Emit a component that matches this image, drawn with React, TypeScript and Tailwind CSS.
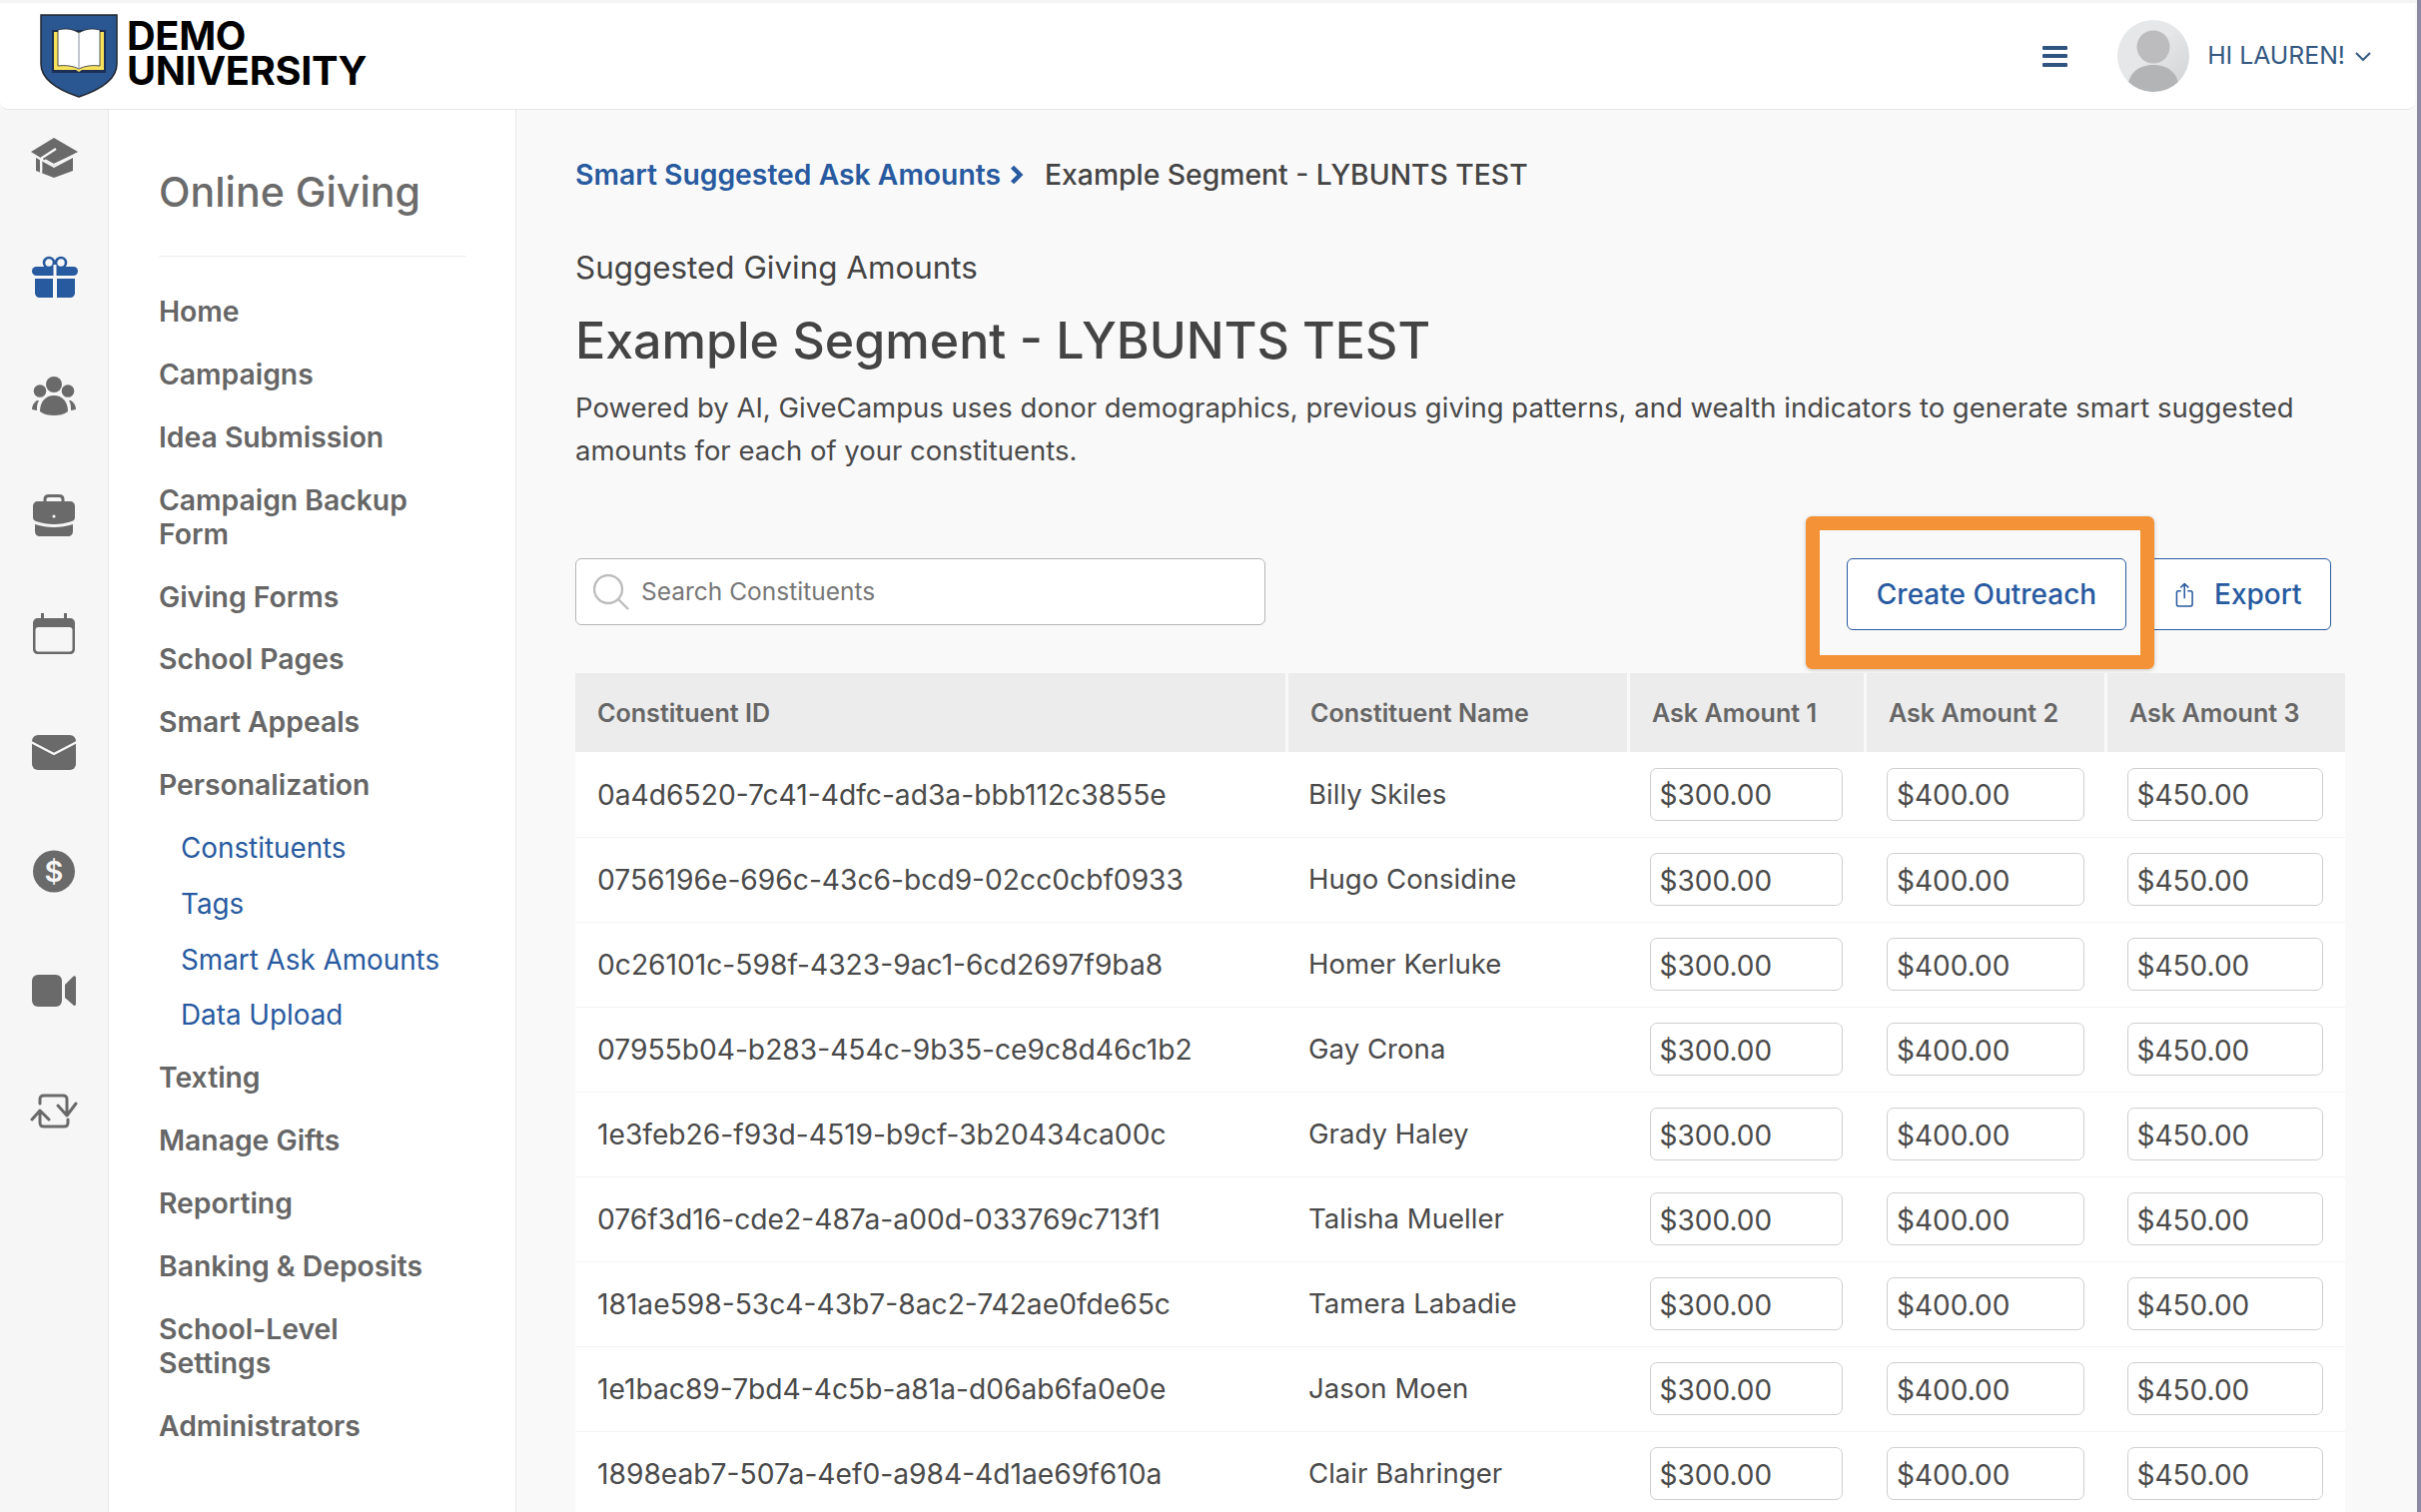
const mainNav = [
  { label: 'Home' },
  { label: 'Campaigns' },
  { label: 'Idea Submission' },
  { label: 'Campaign Backup Form' },
  { label: 'Giving Forms' },
  { label: 'School Pages' },
  { label: 'Smart Appeals' },
  { label: 'Personalization', children: ['Constituents', 'Tags', 'Smart Ask Amounts', 'Data Upload'] },
  { label: 'Texting' },
  { label: 'Manage Gifts' },
  { label: 'Reporting' },
  { label: 'Banking & Deposits' },
  { label: 'School-Level Settings' },
  { label: 'Administrators' },
]

const rows = [
  ['0a4d6520-7c41-4dfc-ad3a-bbb112c3855e', 'Billy Skiles'],
  ['0756196e-696c-43c6-bcd9-02cc0cbf0933', 'Hugo Considine'],
  ['0c26101c-598f-4323-9ac1-6cd2697f9ba8', 'Homer Kerluke'],
  ['07955b04-b283-454c-9b35-ce9c8d46c1b2', 'Gay Crona'],
  ['1e3feb26-f93d-4519-b9cf-3b20434ca00c', 'Grady Haley'],
  ['076f3d16-cde2-487a-a00d-033769c713f1', 'Talisha Mueller'],
  ['181ae598-53c4-43b7-8ac2-742ae0fde65c', 'Tamera Labadie'],
  ['1e1bac89-7bd4-4c5b-a81a-d06ab6fa0e0e', 'Jason Moen'],
  ['1898eab7-507a-4ef0-a984-4d1ae69f610a', 'Clair Bahringer'],
]

const Logo = () => (
  <svg viewBox="0 0 78 84" className="w-[78px] h-[84px] shrink-0">
    <path d="M1 1H77V50C77 66 60 76 39 83C18 76 1 66 1 50Z" fill="#2a5691" stroke="#23272e" strokeWidth="1.5" />
    <rect x="12" y="16" width="54" height="43" fill="#1d2f52" />
    <path d="M14 18H64V56H42L39 58L36 56H14Z" fill="#f7e25c" />
    <path d="M18 16C26 14 33 15 39 19C45 15 52 14 60 16V52C52 51 45 52 39 55C33 52 26 51 18 52Z" fill="#ffffff" stroke="#22262c" strokeWidth="0.8" />
    <path d="M39 19V55" stroke="#9aa0ac" strokeWidth="1.2" />
  </svg>
)

const Avatar = () => (
  <svg viewBox="0 0 72 72" className="w-[72px] h-[72px] shrink-0">
    <defs>
      <linearGradient id="avatarBg" x1="0" y1="0" x2="1" y2="1">
        <stop offset="0.45" stopColor="#e6e7e9" />
        <stop offset="1" stopColor="#d0d1d3" />
      </linearGradient>
      <clipPath id="avatarClip">
        <circle cx="36" cy="36" r="36" />
      </clipPath>
    </defs>
    <circle cx="36" cy="36" r="36" fill="url(#avatarBg)" />
    <circle cx="36" cy="27" r="16.5" fill="#bcbcbe" />
    <path d="M10 72C10 54 20 45 36 45C52 45 62 54 62 72Z" fill="#b3b4b6" clipPath="url(#avatarClip)" />
  </svg>
)

const iconBox = 'w-[48px] h-[44px] shrink-0'

const HatIcon = () => (
  <svg viewBox="-1 -2 48 44" className={iconBox}>
    <path d="M23 0L47 14L23 28L0 14Z" fill="#6a6a6a" />
    <path d="M5 20L23 30L42 20V33L23 40L5 33Z" fill="#6a6a6a" />
    <path d="M14 22L23 27L46 16" fill="none" stroke="#f6f6f6" strokeWidth="2" />
    <path d="M25 11L11 20C9 24 11 27 10 35" fill="none" stroke="#f6f6f6" strokeWidth="2.4" />
  </svg>
)

const GiftIcon = () => (
  <svg viewBox="-2 -1 48 44" className={iconBox}>
    <circle cx="17" cy="7" r="5" fill="none" stroke="#285a9f" strokeWidth="2.6" />
    <circle cx="29" cy="7" r="5" fill="none" stroke="#285a9f" strokeWidth="2.6" />
    <rect x="0" y="11" width="46" height="9" rx="4.5" fill="#285a9f" />
    <path d="M3 23H21V42H8C5 42 3 40 3 37Z" fill="#285a9f" />
    <path d="M25 23H43V37C43 40 41 42 38 42H25Z" fill="#285a9f" />
    <rect x="21.5" y="9" width="3" height="11" fill="#f6f6f6" />
  </svg>
)

const PeopleIcon = () => (
  <svg viewBox="-2 -3 48 44" className={iconBox}>
    <circle cx="22" cy="8" r="8" fill="#6a6a6a" />
    <circle cx="8" cy="14.5" r="6.3" fill="#6a6a6a" />
    <circle cx="36" cy="14.5" r="6.3" fill="#6a6a6a" />
    <path d="M8 35C8 25 14 19 22 19C30 19 36 25 36 35C32 38 27 39 22 39C17 39 12 38 8 35Z" fill="#6a6a6a" />
    <path d="M5 24C2 26 0 29 0 33L5 34C5 30 5 27 7 24Z" fill="#6a6a6a" />
    <path d="M39 24C42 26 44 29 44 33L39 34C39 30 39 27 37 24Z" fill="#6a6a6a" />
  </svg>
)

const BagIcon = () => (
  <svg viewBox="-3 -1 48 44" className={iconBox}>
    <path d="M12 8V5C12 2 14 1.500 16 1.500H26C28 1.500 30 2 30 5V8" fill="none" stroke="#6a6a6a" strokeWidth="3" />
    <path d="M5 7H37C40 7 42 9 42 12V23C42 25 41 26 39 27C27 31 15 31 3 27C1 26 0 25 0 23V12C0 9 2 7 5 7Z" fill="#6a6a6a" />
    <path d="M2 30C15 34 27 34 40 30V37C40 40 38 42 35 42H7C4 42 2 40 2 37Z" fill="#6a6a6a" />
    <circle cx="21" cy="22" r="1.600" fill="#f6f6f6" />
  </svg>
)

const CalendarIcon = () => (
  <svg viewBox="-3 -2 48 44" className={iconBox}>
    <path d="M5 4H37C40 4 42 6 42 9V35C42 38 40 40 37 40H5C2 40 0 38 0 35V9C0 6 2 4 5 4Z" fill="#6a6a6a" />
    <rect x="2.500" y="13" width="37" height="24.500" rx="3" fill="#f6f6f6" />
    <rect x="8" y="-1" width="3" height="7" fill="#6a6a6a" />
    <rect x="31" y="-1" width="3" height="7" fill="#6a6a6a" />
  </svg>
)

const MailIcon = () => (
  <svg viewBox="-2 -4 48 44" className={iconBox}>
    <rect x="0" y="0" width="44" height="35" rx="6" fill="#6a6a6a" />
    <path d="M-1 7L22 19L45 7" fill="none" stroke="#f6f6f6" strokeWidth="2.4" />
  </svg>
)

const DollarIcon = () => (
  <svg viewBox="-3 -1 48 44" className={iconBox}>
    <circle cx="21" cy="20.500" r="21" fill="#6a6a6a" />
    <text x="21" y="31" textAnchor="middle" fontSize="29" fontWeight="600" fontFamily="Inter, sans-serif" fill="#f6f6f6">$</text>
  </svg>
)

const VideoIcon = () => (
  <svg viewBox="-2 -6 48 44" className={iconBox}>
    <rect x="0" y="0" width="30" height="32" rx="6" fill="#6a6a6a" />
    <path d="M33 10L41 2C42 1 44 1 44 3V29C44 31 42 32 41 30L33 23Z" fill="#6a6a6a" />
  </svg>
)

const RepeatIcon = () => (
  <svg viewBox="-1 -5 48 44" className={iconBox}>
    <path d="M9 10V6C9 3 10 2 13 2H32C35 2 36 3 36 6V20M27 12L36 22L45 10" fill="none" stroke="#6a6a6a" strokeWidth="3" strokeLinecap="round" strokeLinejoin="round" />
    <path d="M1 26L9 17L18 26M9 17V29C9 32 10 33 13 33H33C36 33 37 32 37 29V26" fill="none" stroke="#6a6a6a" strokeWidth="3" strokeLinecap="round" strokeLinejoin="round" />
  </svg>
)

const AmountInput = ({ value }: { value: string }) => (
  <input
    readOnly
    defaultValue={value}
    className="w-full h-[53px] pl-[9px] pt-[2px] bg-white border border-[#cfcfcf] rounded-[7px] text-[28px] text-[#4a4a4a] outline-none"
  />
)

export default function App() {
  return (
    <div className="h-[1514px] w-full overflow-hidden flex bg-[#f9f9f9] font-['Inter',sans-serif]">
      <div className="flex-1 min-w-0 flex flex-col">
        <div className="h-[3px] bg-[#f4f4f4]" />
        <header className="h-[107px] mr-[2px] flex items-center justify-between bg-white border-b border-[#e6e6e6] rounded-b-[8px] pl-[40px] pr-[44px]">
          <div className="flex items-center gap-[9px]">
            <Logo />
            <div className="-mt-[5px] text-[39.7px] leading-[35px] font-bold text-black tracking-[-0.3px]">
              <div>DEMO</div>
              <div>UNIVERSITY</div>
            </div>
          </div>
          <div className="flex items-center">
            <div className="w-[25px] flex flex-col gap-[4.5px] mr-[50px]">
              <span className="h-[4px] rounded-[1px] bg-[#2f5480]" />
              <span className="h-[4px] rounded-[1px] bg-[#2f5480]" />
              <span className="h-[4px] rounded-[1px] bg-[#2f5480]" />
            </div>
            <Avatar />
            <span className="ml-[18px] text-[24.8px] text-[#34587f]">HI LAUREN!</span>
            <svg viewBox="0 0 16 9" className="ml-[10px] w-[16px] h-[9px]">
              <path d="M1 1L8 8L15 1" fill="none" stroke="#34587f" strokeWidth="2" />
            </svg>
          </div>
        </header>

        <div className="flex-1 min-h-0 flex">
          <nav className="w-[108px] shrink-0 bg-[#f6f6f6] flex flex-col items-center pt-[26px] gap-[75.2px]">
            <HatIcon />
            <GiftIcon />
            <PeopleIcon />
            <BagIcon />
            <CalendarIcon />
            <MailIcon />
            <DollarIcon />
            <VideoIcon />
            <RepeatIcon />
          </nav>

          <aside className="w-[409px] shrink-0 bg-white border-x border-[#e8e8e8] pl-[50px] pr-[50px]">
            <h2 className="mt-[54px] text-[41.1px] leading-[56px] font-medium text-[#6b6b6b]">Online Giving</h2>
            <div className="mt-[36px] mb-[38px] h-px bg-[#ededed]" />
            <ul className="flex flex-col gap-[28.9px]">
              {mainNav.map(item => (
                <li key={item.label}>
                  <div className="max-w-[270px] text-[28.3px] leading-[34px] font-semibold text-[#666666]">{item.label}</div>
                  {item.children && (
                    <ul className="mt-[29px] pl-[22px] flex flex-col gap-[21.7px]">
                      {item.children.map(child => (
                        <li key={child} className="text-[27.8px] leading-[34px] text-[#285a9f]">{child}</li>
                      ))}
                    </ul>
                  )}
                </li>
              ))}
            </ul>
          </aside>

          <main className="flex-1 min-w-0 pl-[59px] pr-[72px] pt-[48px]">
            <div className="flex items-center text-[28.3px] leading-[34px] font-medium">
              <span className="font-semibold text-[#285a9f]">Smart Suggested Ask Amounts</span>
              <svg viewBox="0 0 12 18" className="ml-[9px] mr-[21px] w-[14px] h-[20px]">
                <path d="M2 2L9 9L2 16" fill="none" stroke="#285a9f" strokeWidth="4" />
              </svg>
              <span className="text-[#444444]">Example Segment - LYBUNTS TEST</span>
            </div>
            <div className="mt-[56px] text-[31.4px] leading-[40px] text-[#444444]">Suggested Giving Amounts</div>
            <h1 className="mt-[23px] text-[50.1px] leading-[60px] font-medium text-[#444444]">Example Segment - LYBUNTS TEST</h1>
            <p className="mt-[16px] text-[27.5px] leading-[43px] text-[#4a4a4a]">
              Powered by AI, GiveCampus uses donor demographics, previous giving patterns, and wealth indicators to generate smart suggested amounts for each of your constituents.
            </p>

            <div className="relative mt-[86px] mb-[43px] pr-[14px] flex items-start justify-between">
              <div className="w-[691px] h-[67px] flex items-center bg-white border border-[#b5b5b5] rounded-[6px] pl-[17px]">
                <svg viewBox="0 0 36 36" className="w-[36px] h-[36px] shrink-0">
                  <circle cx="15" cy="15" r="14" fill="none" stroke="#bdbdbd" strokeWidth="2.4" />
                  <path d="M25 25L35 35" stroke="#bdbdbd" strokeWidth="2.4" />
                </svg>
                <input
                  placeholder="Search Constituents"
                  className="flex-1 ml-[12px] bg-transparent text-[24.5px] outline-none placeholder:text-[#777777]"
                />
              </div>
              <div className="flex gap-[15px]">
                <button className="w-[280px] h-[72px] bg-white border border-[#285a9f] rounded-[6px] text-[28px] font-medium text-[#285a9f]">
                  Create Outreach
                </button>
                <button className="w-[190px] h-[72px] flex items-center pl-[33px] bg-white border border-[#285a9f] rounded-[6px] text-[28px] font-medium text-[#285a9f]">
                  <svg viewBox="0 0 20 26" className="w-[19px] h-[25px]">
                    <path d="M6 9H3C2 9 1.500 9.500 1.500 11V23C1.500 24 2 25 3 25H16C17 25 18 24 18 23V11C18 9.500 17 9 16 9H13M9.700 17V1.500M5.500 5.500L9.700 1.500L14 5.500" fill="none" stroke="#285a9f" strokeWidth="1.600" />
                  </svg>
                  <span className="ml-[20px]">Export</span>
                </button>
              </div>
              <div className="absolute left-[1232px] top-[-42px] w-[349px] h-[153px] border-[14px] border-[#f39237] rounded-[6px] shadow-[0_1px_4px_rgba(0,0,0,0.2)]" />
            </div>

            <table className="w-[1772px] table-fixed border-collapse">
              <colgroup>
                <col className="w-[712.5px]" />
                <col className="w-[342px]" />
                <col className="w-[237px]" />
                <col className="w-[241px]" />
                <col className="w-[239.5px]" />
              </colgroup>
              <thead>
                <tr className="h-[79px] bg-[#ececec] text-left text-[25.1px] text-[#666666]">
                  <th className="pl-[22px] pt-[2px] font-semibold border-r-[3px] border-[#f9f9f9]">Constituent ID</th>
                  <th className="pl-[22px] pt-[2px] font-semibold border-r-[3px] border-[#f9f9f9]">Constituent Name</th>
                  <th className="pl-[22px] pt-[2px] font-semibold border-r-[3px] border-[#f9f9f9]">Ask Amount 1</th>
                  <th className="pl-[22px] pt-[2px] font-semibold border-r-[3px] border-[#f9f9f9]">Ask Amount 2</th>
                  <th className="pl-[22px] pt-[2px] font-semibold">Ask Amount 3</th>
                </tr>
              </thead>
              <tbody>
                {rows.map(([id, name]) => (
                  <tr key={id} className="h-[85px] bg-white border-b border-[#f3f3f3] text-[#4a4a4a]">
                    <td className="pl-[22px] pt-[1px] text-[28.2px]">{id}</td>
                    <td className="pl-[21.5px] pt-[1px] text-[27.6px]">{name}</td>
                    <td className="pl-[21px] pr-[23px]"><AmountInput value="$300.00" /></td>
                    <td className="pl-[21.5px] pr-[22px]"><AmountInput value="$400.00" /></td>
                    <td className="pl-[21px] pr-[22px]"><AmountInput value="$450.00" /></td>
                  </tr>
                ))}
              </tbody>
            </table>
          </main>
        </div>
      </div>
      <div className="w-[4px] shrink-0 bg-[#8b8aa3]" />
    </div>
  )
}
